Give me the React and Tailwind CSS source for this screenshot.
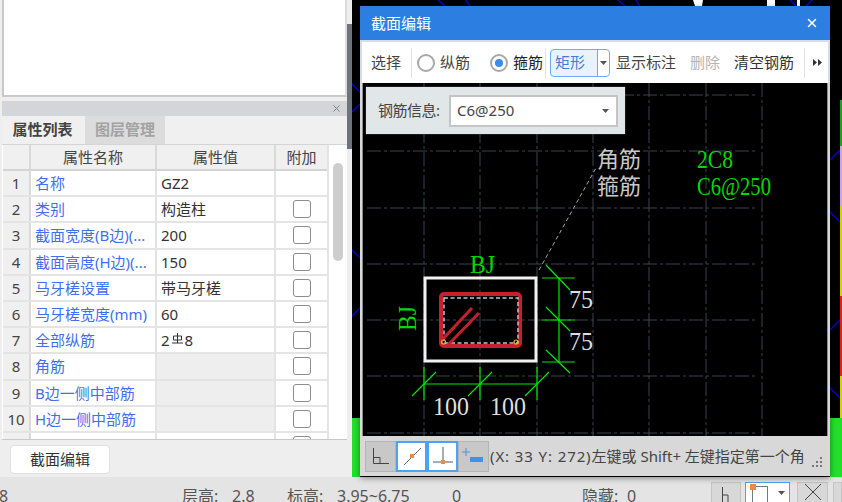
import React from "react";
import { X } from "lucide-react";

const rows = [
  { no: 1, name: "名称", value: "GZ2", noCheck: true },
  { no: 2, name: "类别", value: "构造柱" },
  { no: 3, name: "截面宽度(B边)(...", value: "200" },
  { no: 4, name: "截面高度(H边)(...", value: "150" },
  { no: 5, name: "马牙槎设置", value: "带马牙槎" },
  { no: 6, name: "马牙槎宽度(mm)", value: "60" },
  { no: 7, name: "全部纵筋", rebar: true },
  { no: 8, name: "角筋", value: "", locked: true },
  { no: 9, name: "B边一侧中部筋", value: "", locked: true },
  { no: 10, name: "H边一侧中部筋", value: "", locked: true },
  { no: "", name: "", value: "" },
];

const Caret = ({ className = "" }) => (
  <svg width="7" height="4" viewBox="0 0 7 4" className={className}>
    <path d="M0 0h7L3.5 4z" fill="#555" />
  </svg>
);

const PropertyTable = () => (
  <div className="h-[295px] overflow-hidden border-b border-[#c8c8c8] flex bg-white pl-px">
    <div className="w-[324px] shrink-0">
      <div className="flex h-[26px] bg-[#f0f0f0] border-b-2 border-[#d4d4d4] text-[15px] text-[#444]">
        <div className="w-[28px] border-r-2 border-[#d9d9d9]" />
        <div className="w-[126px] border-r-2 border-[#d9d9d9] text-center leading-[25px]">属性名称</div>
        <div className="w-[119px] border-r-2 border-[#d9d9d9] text-center leading-[25px]">属性值</div>
        <div className="w-[51px] text-center leading-[25px]">附加</div>
      </div>
      {rows.map((r) => (
        <div key={r.no} className="flex h-[26.2px] border-b-2 border-[#e4e4e4] text-[15px] leading-[24px]">
          <div className="w-[28px] bg-[#f0f0f0] border-r-2 border-[#d9d9d9] text-center text-[#444]">{r.no}</div>
          <div className="w-[126px] border-r-2 border-[#e4e4e4] pl-[4px] text-[#3f6ff0] whitespace-nowrap overflow-hidden">{r.name}</div>
          <div className={`w-[119px] border-r-2 border-[#e4e4e4] pl-[4px] text-[#333] ${r.locked ? "bg-[#eeeeee]" : ""}`}>
            {r.rebar ? (
              <span className="flex items-center">
                2
                <svg width="13" height="11" viewBox="0 0 13 11" fill="none" stroke="#333" className="mx-px -mt-[4px]">
                  <path d="M6.5 0V10M1 10H12M2.5 7V3H10.5V7H2.5" />
                </svg>
                8
              </span>
            ) : (
              r.value
            )}
          </div>
          <div className="w-[51px] flex items-center justify-center">
            {!r.noCheck && <div className="w-[18px] h-[18px] rounded-[3px] border border-[#8c8c8c] bg-white" />}
          </div>
        </div>
      ))}
    </div>
    <div className="flex-1 border-l-2 border-[#e4e4e4] pt-[18px] pl-[4px]">
      <div className="w-[10px] h-[98px] rounded-[5px] bg-[#cdcdcd]" />
    </div>
  </div>
);

const LeftPanel = () => (
  <div className="w-[347px] shrink-0 bg-[#eeeeee] flex flex-col pl-[2px]">
    <div className="h-[97px] bg-white border-2 border-t-0 border-[#c9c9c9] border-r-[#dcdcdc]" />
    <div className="h-[4px]" />
    <div className="h-[15px] bg-[#d3d5d8] flex items-center justify-end pr-[5px]">
      <X size={11} strokeWidth={2} className="text-[#7a7a7a]" />
    </div>
    <div className="h-[29px] flex items-end gap-[2px] bg-[#f0f0f0] border-b border-[#d4d4d4] text-[15px] font-bold">
      <div className="h-[28px] w-[81px] text-center leading-[27px] text-[#444]">属性列表</div>
      <div className="h-[28px] w-[80px] text-center leading-[27px] text-[#a3a3a3] bg-[#dcdcdc]">图层管理</div>
    </div>
    <PropertyTable />
    <div className="pl-[8px] pt-[5px]">
      <button className="w-[100px] h-[29px] bg-white rounded-[4px] border border-[#dedede] text-[15px] text-[#333]">截面编辑</button>
    </div>
  </div>
);

const gridX = [424, 480, 537, 593, 649, 706, 762];
const gridY = [95, 151, 208, 264, 320, 376, 433];

// viewBox keeps the drawing in page coordinates, easier to read off the screenshot
const SectionDrawing = () => (
  <svg width="464" height="353" viewBox="363 83 464 353" className="block">
    {gridX.map((x) => (
      <line key={x} x1={x} y1="83" x2={x} y2="436" stroke="#3b4450" strokeWidth="1" strokeDasharray="14 3 3 3" />
    ))}
    {gridY.map((y) => (
      <line key={y} x1="367" y1={y} x2="758" y2={y} stroke="#3b4450" strokeWidth="1" strokeDasharray="14 3 3 3" />
    ))}
    <line x1="539" y1="270" x2="596" y2="168" stroke="#a8a8a8" strokeWidth="1" strokeDasharray="4 3" />
    <rect x="425" y="278" width="111" height="83" fill="none" stroke="#f2f2f2" strokeWidth="3" />
    <rect x="441" y="294" width="79" height="52" rx="3" fill="none" stroke="#c4202e" strokeWidth="4" />
    <rect x="444" y="298" width="74" height="45" fill="none" stroke="#b8c4d4" strokeWidth="1.5" strokeDasharray="4 2.5" />
    <line x1="442" y1="340" x2="472" y2="308" stroke="#c4202e" strokeWidth="3" />
    <line x1="448" y1="345" x2="479" y2="313" stroke="#c4202e" strokeWidth="3" />
    <circle cx="443.5" cy="342" r="2" fill="none" stroke="#e8c020" strokeWidth="1.2" />
    <circle cx="516" cy="342" r="2" fill="none" stroke="#e8c020" strokeWidth="1.2" />
    <g stroke="#00e800" strokeWidth="1.2" fill="none">
      <path d="M424 367V400M480 367V400M537 367V400M424 384H537" />
      <path d="M412 396L436 372M468 396L492 372M525 396L549 372" />
      <path d="M542 278H575M542 320H575M542 362H575M559 278V362" />
      <path d="M546 265L570 290M546 307L570 331M546 350L570 373" />
    </g>
    <g fontFamily="'Liberation Serif',serif" fontSize="25" fill="#dedede">
      <text x="569" y="308" textLength="24" lengthAdjust="spacingAndGlyphs">75</text>
      <text x="569" y="350" textLength="24" lengthAdjust="spacingAndGlyphs">75</text>
      <text x="433" y="415" textLength="36" lengthAdjust="spacingAndGlyphs">100</text>
      <text x="490" y="415" textLength="36" lengthAdjust="spacingAndGlyphs">100</text>
    </g>
    <g fontFamily="'Liberation Serif',serif" fontSize="25" fill="#00d800">
      <text x="470" y="273" textLength="25" lengthAdjust="spacingAndGlyphs">BJ</text>
      <text x="0" y="0" transform="translate(416 331) rotate(-90)" textLength="25" lengthAdjust="spacingAndGlyphs">BJ</text>
      <text x="697" y="168" textLength="36" lengthAdjust="spacingAndGlyphs">2C8</text>
      <text x="697" y="195" textLength="74" lengthAdjust="spacingAndGlyphs">C6@250</text>
    </g>
    <g fontFamily="'Noto Sans CJK SC',sans-serif" fontSize="22" fill="#c8c8c8">
      <text x="597" y="167">角筋</text>
      <text x="597" y="194">箍筋</text>
    </g>
  </svg>
);

const ToolText = ({ children, className = "" }) => (
  <span className={`text-[15px] leading-none whitespace-nowrap ${className}`}>{children}</span>
);

const Toolbar = () => (
  <div className="h-[43px] bg-white border-t-2 border-[#d6dde6] flex items-center pl-[9px] text-[#444]">
    <ToolText className="w-[40px]">选择</ToolText>
    <div className="w-px h-[30px] bg-[#e0e0e0] mr-[5px]" />
    <div className="w-[18px] h-[18px] rounded-full border-2 border-[#a8a8a8] mr-[5px]" />
    <ToolText className="w-[50px] text-[#444]">纵筋</ToolText>
    <div className="w-[18px] h-[18px] rounded-full border-2 border-[#a8a8a8] mr-[5px] flex items-center justify-center">
      <div className="w-[8px] h-[8px] rounded-full bg-[#3b8cf0]" />
    </div>
    <ToolText className="w-[32px] text-[#222]">箍筋</ToolText>
    <div className="w-px h-[30px] bg-[#e0e0e0] mr-[4px]" />
    <div className="w-[60px] h-[28px] rounded-[4px] border border-[#66aef5] bg-[#e9f3fd] flex items-center shrink-0">
      <ToolText className="w-[46px] pl-[4px] text-[#3f7fd8]">矩形</ToolText>
      <div className="flex-1 h-full border-l border-[#66aef5] bg-white rounded-r-[4px] flex items-center justify-center">
        <Caret />
      </div>
    </div>
    <ToolText className="w-[74px] ml-[6px] text-[#444]">显示标注</ToolText>
    <ToolText className="w-[44px] text-[#b5b5b5]">删除</ToolText>
    <ToolText className="w-[60px] text-[#333]">清空钢筋</ToolText>
    <div className="w-px h-[30px] bg-[#e0e0e0] ml-[10px]" />
    <svg width="9" height="7" viewBox="0 0 9 7" className="ml-[8px]" fill="#333">
      <path d="M0 0L4 3.5L0 7zM5 0L9 3.5L5 7z" />
    </svg>
  </div>
);

const HintIcon = ({ active, children }) => (
  <div className={`w-[31px] h-[31px] shrink-0 flex items-center justify-center ${active ? "bg-white border-2 border-[#4aa3f5]" : "bg-[#c8c8c8] border border-[#b4b4b4]"}`}>
    {children}
  </div>
);

const StatusHints = () => (
  <div className="h-[40px] bg-[#d8d8d8] flex items-center pl-[5px]">
    <HintIcon>
      <svg width="18" height="18" viewBox="0 0 18 18" fill="none" stroke="#444"><path d="M1.5 1V16.5H17M1.5 10.5H8V16.5" /></svg>
    </HintIcon>
    <HintIcon active>
      <svg width="20" height="20" viewBox="0 0 20 20" fill="none"><path d="M2 19L19 2" stroke="#6b7280" /><rect x="8" y="8" width="4" height="4" fill="#f08a3c" /></svg>
    </HintIcon>
    <HintIcon active>
      <svg width="22" height="20" viewBox="0 0 22 20" fill="none"><path d="M11 1V16M1 16H21" stroke="#4a5a6a" /><rect x="9" y="14" width="4" height="4" fill="#f08a3c" /></svg>
    </HintIcon>
    <HintIcon>
      <svg width="26" height="20" viewBox="0 0 26 20" fill="none"><path d="M5 2V10M1 6H9" stroke="#4a90d9" /><rect x="9" y="11" width="13" height="5" fill="#4a90d9" /></svg>
    </HintIcon>
    <span className="ml-px w-[321px] shrink-0 text-[15px] text-[#444] whitespace-nowrap">
      <span className="tracking-[0.9px]">(X: 33 Y: 272)</span>左键或 Shift+ 左键指定第一个角
    </span>
    <svg width="12" height="12" viewBox="0 0 12 12" className="mt-[12px] shrink-0" fill="#777">
      <rect x="9" y="1" width="2" height="2" /><rect x="5" y="5" width="2" height="2" /><rect x="9" y="5" width="2" height="2" />
      <rect x="1" y="9" width="2" height="2" /><rect x="5" y="9" width="2" height="2" /><rect x="9" y="9" width="2" height="2" />
    </svg>
  </div>
);

const SectionDialog = () => (
  <div className="absolute left-[360px] top-[6px] w-[470px] h-[470px] flex flex-col shadow-[0_2px_6px_rgba(0,0,0,0.45)] bg-[#d8d8d8]">
    <div className="h-[34px] bg-[#2c7fe0] flex items-center justify-between px-[11px] text-white text-[15px]">
      <span>截面编辑</span>
      <X size={14} strokeWidth={2.5} />
    </div>
    <div className="px-[2px] bg-[#d6dde6]">
      <Toolbar />
    </div>
    <div className="relative h-[353px] mx-[2px] bg-black border-x border-[#8c8c8c] overflow-hidden">
      <SectionDrawing />
      <div className="absolute left-[3px] top-[4px] w-[259px] h-[47px] bg-[#e1e7e9] flex items-center pl-[12px] shadow-[0_0_1px_#999]">
        <span className="text-[15px] text-[#444] w-[71px] whitespace-nowrap tracking-[-0.5px]">钢筋信息:</span>
        <div className="w-[169px] h-[32px] bg-white border-2 border-[#c4c4c4] flex items-center justify-between pl-[6px] pr-[7px]">
          <span className="text-[15px] text-[#444]">C6@250</span>
          <Caret />
        </div>
      </div>
    </div>
    <StatusHints />
  </div>
);

const Backdrop = () => (
  <svg width="490" height="477" viewBox="352 0 490 477" className="block">
    <rect x="352" y="0" width="490" height="477" fill="#000" />
    <g stroke="#0000e0" strokeWidth="1.3" fill="none">
      <path d="M352 84L360 92M352 112L360 104M352 250L360 258M352 316L360 308M830 160L842 148M830 212L842 224M830 330L842 318M830 388L842 400" />
      <path d="M438 0L445 6M470 6L466 0M618 0L625 6M640 6L636 0M790 0L796 6M812 0L806 6" />
    </g>
    <path d="M693 0h10l-1 6h-7zM767 0h8v6h-8zM797 0h3v6h-3z" fill="#fff" />
    <rect x="352" y="418" width="8" height="59" fill="#22e02a" />
    <rect x="830" y="418" width="12" height="59" fill="#22e02a" />
    <rect x="840" y="100" width="2" height="46" fill="#20a020" />
    <rect x="840" y="146" width="2" height="60" fill="#d0a0e8" />
    <rect x="840" y="206" width="2" height="90" fill="#d8d000" />
    <rect x="840" y="296" width="2" height="80" fill="#e02020" />
    <rect x="840" y="376" width="2" height="42" fill="#d8d000" />
  </svg>
);

const BottomBar = () => (
  <div className="h-[25px] bg-[#e4e4e4] flex items-start text-[16px] leading-[24px] text-[#555] overflow-hidden">
    <span className="w-[183px] shrink-0 mt-[7px] -ml-px whitespace-nowrap">8</span>
    <span className="w-[50px] shrink-0 mt-[7px] whitespace-nowrap">层高:</span>
    <span className="w-[55px] shrink-0 mt-[7px]">2.8</span>
    <span className="w-[50px] shrink-0 mt-[7px] whitespace-nowrap">标高:</span>
    <span className="w-[115px] shrink-0 mt-[7px]">3.95~6.75</span>
    <span className="w-[130px] shrink-0 mt-[7px]">0</span>
    <span className="w-[45px] shrink-0 mt-[7px] whitespace-nowrap">隐藏:</span>
    <span className="w-[84px] shrink-0 mt-[7px]">0</span>
    <div className="w-[30px] h-[24px] mt-[5px] shrink-0 bg-[#d8d8d8] border border-[#c4c4c4] flex items-center justify-center">
      <svg width="14" height="18" viewBox="0 0 14 18" fill="none" stroke="#444"><path d="M3.5 2V17M3.5 10H9V17" /></svg>
    </div>
    <div className="w-[45px] h-[24px] mt-[5px] ml-[4px] shrink-0 bg-white border border-[#4aa3f5] flex items-start pl-[6px] gap-[10px]">
      <div className="w-[16px] h-[20px] mt-[3px] border border-[#6c7a89] relative">
        <div className="absolute -left-[3px] -top-[3px] w-[6px] h-[6px] bg-[#f08a3c]" />
      </div>
      <Caret className="mt-[8px]" />
    </div>
    <div className="w-[31px] h-[24px] mt-[5px] ml-[7px] bg-[#d8d8d8] border border-[#c4c4c4] flex items-center justify-center shrink-0">
      <svg width="18" height="22" viewBox="0 0 18 22" fill="none" stroke="#444"><path d="M1 1L17 17M17 1L1 17" /></svg>
    </div>
    <div className="w-[9px] h-[24px] mt-[5px] ml-[5px] bg-[#d8d8d8] border border-[#c4c4c4] shrink-0" />
  </div>
);

export default function App() {
  return (
    <div className="relative w-[842px] h-[502px] overflow-hidden bg-[#eeeeee] font-['Noto_Sans','Noto_Sans_CJK_SC',sans-serif]">
      <div className="flex h-[477px]">
        <LeftPanel />
        <div className="w-[5px] shrink-0 flex flex-col bg-[#eeeeee]">
          <div className="h-[24px] bg-[#eeeeee]" />
          <div className="h-[125px] bg-[#6e7479]" />
        </div>
        <Backdrop />
      </div>
      <BottomBar />
      <SectionDialog />
    </div>
  );
}
